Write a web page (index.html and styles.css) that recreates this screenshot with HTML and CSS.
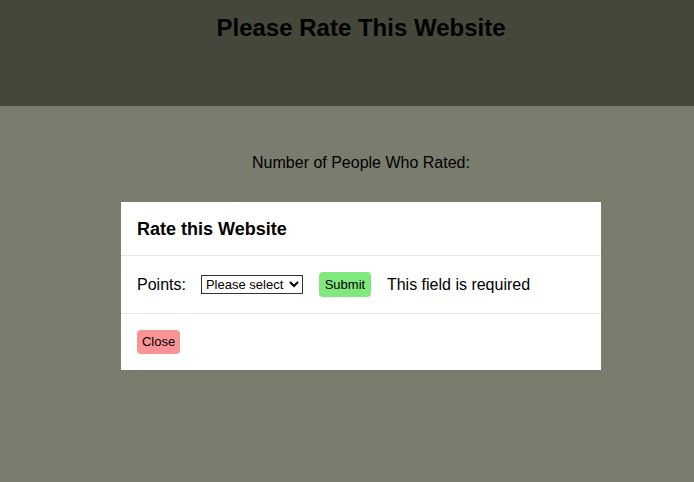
FILE: index.html
```html
<!DOCTYPE html>
<html>
<head>
<meta charset="utf-8">
<link rel="stylesheet" href="styles.css">
</head>
<body>
<header class="top">
  <h1 class="title">Please Rate This Website</h1>
</header>
<main class="main">
  <p class="count">Number of People Who Rated:</p>
  <div class="modal">
    <div class="modal-head">Rate this Website</div>
    <div class="modal-body">
      <span class="label">Points:</span>
      <select class="sel"><option>Please select</option></select>
      <button class="btn btn-submit">Submit</button>
      <span class="msg">This field is required</span>
    </div>
    <div class="modal-foot">
      <button class="btn btn-close">Close</button>
    </div>
  </div>
</main>
</body>
</html>
```
FILE: styles.css
```css
html, body { margin: 0; padding: 0; }
body {
  background: #7a7d6d;
  font-family: "Liberation Sans", Arial, sans-serif;
  color: #000;
  height: 482px;
  overflow: hidden;
}
.top {
  background: #46473b;
  height: 106px;
  padding-left: 28px;
  box-sizing: border-box;
  display: flex;
  justify-content: center;
}
.title {
  margin: 14px 0 0;
  font-size: 24px;
  font-weight: bold;
  line-height: 28px;
}
.main {
  padding-left: 28px;
  display: flex;
  flex-direction: column;
  align-items: center;
}
.count {
  margin: 47px 0 0;
  font-size: 16px;
  line-height: 20px;
}
.modal {
  margin-top: 29px;
  width: 480px;
  background: #fff;
}
.modal-head {
  height: 54px;
  box-sizing: border-box;
  padding: 16px 16px 0;
  font-size: 18px;
  font-weight: bold;
  line-height: 22px;
  border-bottom: 1px solid #e6e6e6;
}
.modal-body {
  height: 58px;
  box-sizing: border-box;
  padding: 0 16px;
  display: flex;
  align-items: center;
  border-bottom: 1px solid #e6e6e6;
  font-size: 16px;
}
.label { margin-right: 15px; }
.sel {
  font-family: "Liberation Sans", Arial, sans-serif;
  font-size: 13px;
  height: 19px;
  width: 102px;
  padding: 0;
  border: 1px solid #333;
  border-radius: 0;
  background: #fff;
  color: #000;
  margin-right: 16px;
}
.btn {
  font-family: "Liberation Sans", Arial, sans-serif;
  font-size: 13px;
  border: none;
  border-radius: 4px;
  color: #000;
  padding: 0 5px;
  height: 25px;
  line-height: 25px;
}
.btn-submit { background: #80e87d; margin-right: 16px; width: 52px; }
.msg { font-size: 16px; }
.modal-foot {
  height: 56px;
  box-sizing: border-box;
  padding: 16px 16px 0;
}
.btn-close { background: #fa9396; width: 43px; height: 24px; line-height: 24px; padding: 0; }
```
